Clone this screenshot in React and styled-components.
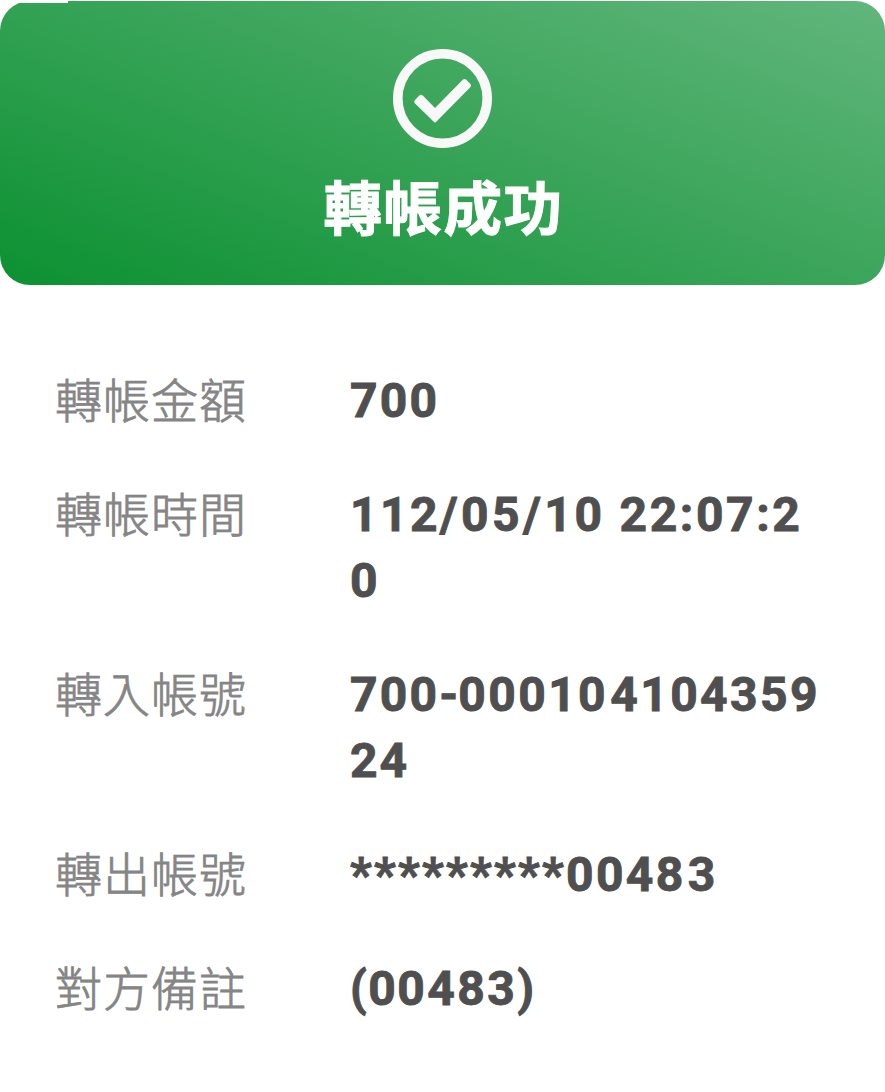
import React from 'react';
import styled, { createGlobalStyle } from 'styled-components';

const GlobalStyle = createGlobalStyle`
  * { box-sizing: border-box; }
  body { margin: 0; background: #fff; font-family: Roboto, "Noto Sans CJK TC", sans-serif; }
`;

const Page = styled.main`
  display: flow-root;
  width: 885px;
  height: 1092px;
  overflow: hidden;
  background: #fff;
`;

const Banner = styled.header`
  position: relative;
  display: flex;
  flex-direction: column;
  align-items: center;
  height: 284px;
  margin-top: 1px;
  padding-top: 47px;
  border-radius: 30px;
  background: linear-gradient(22deg, #0c9132, #62b67c);
`;

const TopNotch = styled.span`
  position: absolute;
  top: 0;
  left: 0;
  width: 68px;
  height: 2px;
  background: #fff;
`;

const CheckIcon = styled.svg`
  display: block;
  width: 100px;
  height: 100px;
`;

const Title = styled.h1`
  margin: 18px 0 0 2px;
  color: #fff;
  font-size: 58.5px;
  letter-spacing: 1.5px;
  line-height: 88px;
  font-weight: 700;
  -webkit-text-stroke: 1px #fff;
`;

const Details = styled.dl`
  display: flex;
  flex-direction: column;
  gap: 48px;
  margin: 82px 0 0;
  padding: 0 60px 0 55px;
`;

const Row = styled.div`
  display: grid;
  grid-template-columns: 295px 1fr;
  line-height: 66px;
`;

const Label = styled.dt`
  padding-top: 2px;
  height: 66px;
  color: #858585;
  font-size: 47px;
  letter-spacing: 1px;
  font-weight: 300;
  -webkit-text-stroke: 0.8px #858585;
`;

const Value = styled.dd`
  margin: 0;
  padding-top: 1px;
  margin-bottom: -1px;
  color: #4f4f4f;
  font-size: 48px;
  font-weight: 700;
  white-space: nowrap;
  -webkit-text-stroke: 0.9px #4f4f4f;
`;

const Line = styled.div``;

const Run = styled.span`
  letter-spacing: ${({ $tracking }) => $tracking}px;
`;

const rows = [
  { label: '轉帳金額', lines: [[['700', 2.2]]] },
  {
    label: '轉帳時間',
    lines: [[['112', 2.4], ['/05/', 3.4], ['10 ', 2.8], ['22:07:2', 2.6]], [['0', 0]]],
  },
  {
    label: '轉入帳號',
    lines: [[['700', 2.2], ['-', 0.2], ['0001', 2.4], ['0', 4.6], ['4104359', 2.4]], [['24', 2]]],
  },
  { label: '轉出帳號', lines: [[['*********', 2.2], ['004', 2.4], ['8', 4.5], ['3', 0]]] },
  { label: '對方備註', lines: [[['(0', 1.4], ['0483)', 2.5]]] },
];

export default function App() {
  return (
    <Page>
      <GlobalStyle />
      <Banner>
        <TopNotch />
        <CheckIcon viewBox="0 0 100 100" fill="none">
          <circle cx="49.5" cy="50.5" r="44.7" stroke="#f8f8f8" strokeWidth="9.6" />
          <path
            d="M21.8 52.3 L26.2 47.6 Q28 46 29.8 47.6 L42 60 L70 31.5 Q71.5 30.3 73 31.5 L77.5 36 Q78.8 37.5 77.5 39 L43.5 73.5 Q42 75.5 40.5 73.5 L21.8 55.3 Q20.5 53.8 21.8 52.3 Z"
            fill="#f8f8f8"
          />
        </CheckIcon>
        <Title>轉帳成功</Title>
      </Banner>
      <Details>
        {rows.map(({ label, lines }) => (
          <Row key={label}>
            <Label>{label}</Label>
            <Value>
              {lines.map((runs, i) => (
                <Line key={i}>
                  {runs.map(([text, tracking], j) => (
                    <Run key={j} $tracking={tracking}>{text}</Run>
                  ))}
                </Line>
              ))}
            </Value>
          </Row>
        ))}
      </Details>
    </Page>
  );
}
